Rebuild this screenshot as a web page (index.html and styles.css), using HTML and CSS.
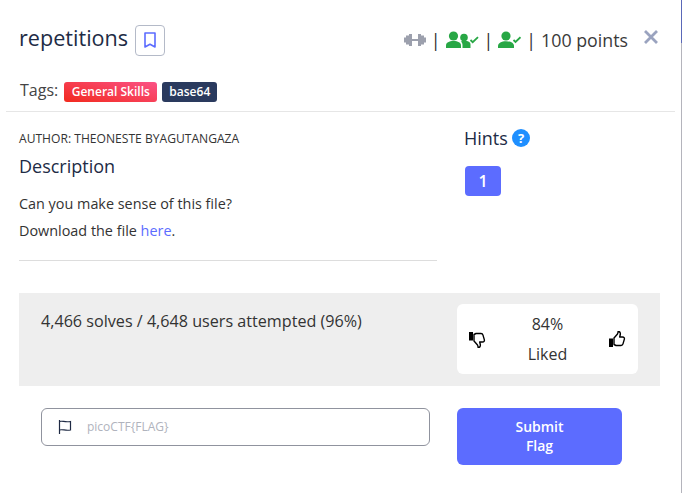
FILE: index.html
```html
<!DOCTYPE html>
<html lang="en">
<head>
<meta charset="utf-8">
<title>repetitions</title>
<link rel="stylesheet" href="styles.css">
</head>
<body>
<div class="modal">
  <header class="head">
    <div class="title-row">
      <h1 class="title">repetitions</h1>
      <button class="bookmark" aria-label="Bookmark">
        <svg width="14" height="16" viewBox="0 0 14 16"><path d="M2 1h10v14l-5-2.800L2 15z" fill="none" stroke="#5c6cff" stroke-width="1.600" stroke-linejoin="round"/></svg>
      </button>
      <div class="stats">
        <svg width="22" height="14" viewBox="0 0 22 14"><path d="M0 4.500h2V2.500h3V1h3v12H5v-1.500H2v-2H0zM14 1h3v1.500h3v2h2v5h-2v2h-3V13h-3zM8 6h6v2H8z" fill="#9ca0ad"/></svg>
        <span class="pipe">|</span>
        <svg width="33" height="18" viewBox="0 0 33 18"><g fill="#28a745"><circle cx="7.500" cy="5" r="4.600"/><path d="M0 17v-2.500C0 11.500 3 10 7.500 10s7.500 1.500 7.500 4.500V17z"/><circle cx="18" cy="6.500" r="3.800"/><path d="M16.500 17v-3c0-1.500-.6-2.700-1.600-3.500 1-.5 2.300-.7 3.600-.7 3.500 0 6 1.300 6 3.700V17z"/></g><path d="M24.500 9l2.200 2.200 5.300-5" fill="none" stroke="#28a745" stroke-width="1.800"/></svg>
        <span class="pipe">|</span>
        <svg width="23" height="18" viewBox="0 0 23 18"><g fill="#28a745"><circle cx="8" cy="5" r="4.600"/><path d="M0 17v-2c0-3 3.500-4.800 8-4.800s8 1.800 8 4.800v2z"/></g><path d="M15.500 9l2 2 5-4.800" fill="none" stroke="#28a745" stroke-width="1.800"/></svg>
        <span class="pipe">|</span>
        <span>100 points</span>
      </div>
      <button class="close" aria-label="Close">
        <svg width="14" height="14" viewBox="0 0 14 14"><path d="M1 1l12 12M13 1L1 13" stroke="#9aa3bf" stroke-width="2.800" fill="none"/></svg>
      </button>
    </div>
    <div class="tags-row">
      <span class="tags-label">Tags:</span>
      <span class="tag tag-red">General Skills</span>
      <span class="tag tag-navy">base64</span>
    </div>
  </header>
  <section class="body">
    <div class="main">
      <div class="author">AUTHOR: THEONESTE BYAGUTANGAZA</div>
      <h2 class="desc-title">Description</h2>
      <p class="para">Can you make sense of this file?</p>
      <p class="para">Download the file <a class="link" href="#">here</a>.</p>
    </div>
    <aside class="hints">
      <div class="hints-title">Hints
        <svg width="18" height="18" viewBox="0 0 18 18"><circle cx="9" cy="9" r="9" fill="#1f8fff"/><text x="9" y="13.500" class="q">?</text></svg>
      </div>
      <button class="hint-btn">1</button>
    </aside>
  </section>
  <section class="solves">
    <div class="solves-text">4,466 solves / 4,648 users attempted (96%)</div>
    <div class="liked">
      <svg width="17" height="17" viewBox="0 0 17 17"><path d="M0 1h4v8.500H0z" fill="#000"/><path d="M5 10l3.500 4c.5.8.5 1.800.6 2.500 1.500.3 2.500-1.300 2.200-3l-.6-2.500h2.800c1.500 0 2.200-1 1.800-2.400l-1.300-4.500c-.3-1-1-1.600-2-1.600H7L5 3.500z" fill="none" stroke="#000" stroke-width="1.400" stroke-linejoin="round"/></svg>
      <div class="liked-text"><div>84%</div><div>Liked</div></div>
      <svg width="17" height="17" viewBox="0 0 17 17"><path d="M0 7.500h4V16H0z" fill="#000"/><path d="M5 7l3.500-4c.5-.8.5-1.800.6-2.500 1.500-.3 2.500 1.300 2.200 3l-.6 2.500h2.800c1.500 0 2.200 1 1.800 2.400l-1.300 4.500c-.3 1-1 1.600-2 1.600H7L5 13.500z" fill="none" stroke="#000" stroke-width="1.400" stroke-linejoin="round"/></svg>
    </div>
  </section>
  <section class="submit">
    <div class="flag-input">
      <svg width="14" height="14" viewBox="0 0 14 14"><path d="M1.500 0v14" stroke="#1f2a44" stroke-width="1.200"/><path d="M1.500 1.500c3-1 5 1 11 0v8.500c-5 1-8-1-11 0" fill="none" stroke="#1f2a44" stroke-width="1.200"/></svg>
      <span class="placeholder">picoCTF{FLAG}</span>
    </div>
    <button class="submit-btn">Submit<br>Flag</button>
  </section>
</div>
</body>
</html>
```
FILE: styles.css
```css
* { box-sizing: border-box; }
html, body { margin: 0; height: 100%; }
body {
  background: #fff;
  font-family: "Open Sans", "Noto Sans", sans-serif;
  color: #212b45;
  overflow: hidden;
}
button { font-family: inherit; cursor: pointer; }
.modal {
  width: 682px; height: 493px; background: #fff;
  border-right: 1px solid;
  border-image: linear-gradient(#5a68b8 0 44px, #b4b4bc 44px) 1;
}
.head { margin: 0 6px; height: 112px; padding: 24px 14px 0; border-bottom: 1px solid #e6e6e6; }
.title-row { display: flex; align-items: center; height: 32px; }
.title { margin: 0 0 4px -1px; font-size: 21.600px; font-weight: 400; line-height: 30px; color: #212b45; }
.bookmark {
  margin-left: 7px; width: 30px; height: 31px; padding: 0; background: #fff;
  border: 1px solid #b4bac8; border-radius: 4px;
  display: flex; align-items: center; justify-content: center;
}
.stats { margin-left: auto; display: flex; align-items: center; gap: 5px; font-size: 17.800px; color: #3a3a3a; }
.pipe { color: #333; }
.close { margin: -6px 3px 0 16px; padding: 0; border: 0; background: none; display: flex; }
.tags-row { display: flex; align-items: center; margin-top: 23px; gap: 5px; }
.tags-label { font-size: 16px; color: #444; margin: 0 1px 4px 0; }
.tag { font-size: 12px; font-weight: 600; color: #fff; padding: 0 7px; height: 20px; line-height: 20px; border-radius: 3px; }
.tag-red { background: linear-gradient(195deg, #fb5286, #f22a1e); padding: 0 7.500px; }
.tag-navy { background: #2a3a5e; }
.body { display: flex; margin: 0 19px; height: 181px; }
.main { width: 418px; height: 149px; padding-top: 19px; border-bottom: 1px solid #ddd; }
.author { font-size: 12.100px; line-height: 16px; color: #333; }
.desc-title { margin: 7px 0 16px; font-size: 18px; font-weight: 400; line-height: 24px; }
.para { margin: 0 0 8px; font-size: 14.400px; line-height: 19px; color: #333; }
.link { color: #5c6cff; text-decoration: none; }
.hints { margin-left: 27px; padding-top: 14px; }
.hints-title { display: flex; align-items: center; gap: 4px; font-size: 18px; line-height: 24px; }
.q { font: 700 13px "Open Sans", sans-serif; fill: #fff; text-anchor: middle; }
.hint-btn {
  margin: 16px 0 0 1px; width: 36px; height: 30px; padding: 0; border: 0; border-radius: 4px;
  background: #5c6cff; color: #fff; font-size: 16px; font-weight: 600;
}
.solves {
  display: flex; justify-content: space-between; margin: 0 21px 0 19px; height: 93px;
  background: #eee; padding: 11px 22px 0 22px;
}
.solves-text { font-size: 16.150px; line-height: 34px; height: 34px; color: #333; }
.liked {
  width: 181px; height: 70px; background: #fff; border-radius: 6px;
  display: flex; align-items: center; justify-content: space-between; padding: 0 12px;
}
.liked-text { text-align: center; font-size: 16px; line-height: 30px; color: #333; }
.submit { display: flex; margin: 22px 0 0 41px; }
.flag-input {
  width: 389px; height: 38px; border: 1px solid #90939e; border-radius: 6px;
  display: flex; align-items: center; padding-left: 16px; gap: 15px;
}
.placeholder { font-size: 12px; color: #b0b3bd; margin-bottom: 1px; }
.submit-btn {
  margin-left: 27px; width: 165px; height: 57px; padding: 0 0 2px; border: 0; border-radius: 6px;
  background: #5c6cff; color: #fff; font-size: 14px; font-weight: 600; line-height: 19px;
}
```
